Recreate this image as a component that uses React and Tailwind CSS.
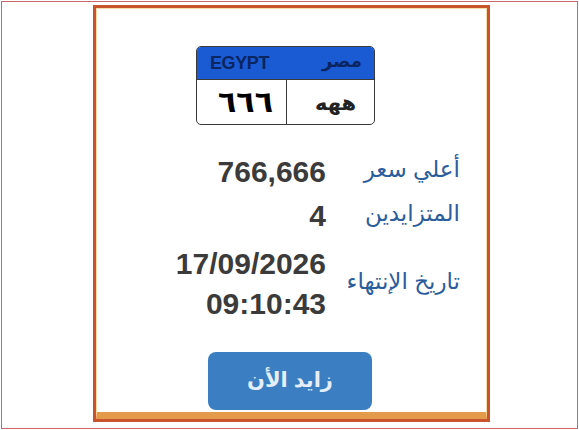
import React from 'react';

const font = { fontFamily: '"Liberation Sans", "DejaVu Sans", Arial, sans-serif' };

function Plate() {
  return (
    <div className="w-[179px] h-[79px] ml-[99px] mt-[37px] rounded-[5px] border-[1.5px] border-[#3a3a3a] overflow-hidden bg-white flex flex-col">
      <div className="h-[33px] bg-[#1a5bd4] flex items-center justify-between pl-[13px] pr-[12px] border-b-[1.5px] border-[#3a3a3a]">
        <span className="text-[18px] font-bold text-[#0a2560] tracking-[-0.4px]">EGYPT</span>
        <span dir="rtl" className="text-[18px] font-bold text-[#0a2560] pb-[3px]">مصر</span>
      </div>
      <div className="flex-1 flex">
        <div className="w-[90px] flex items-center justify-center border-r-[1.5px] border-[#3a3a3a] pl-[8px]">
          <span dir="rtl" className="text-[30px] font-bold text-black leading-none">٦٦٦</span>
        </div>
        <div className="flex-1 flex items-center justify-center pl-[10px]">
          <span dir="rtl" className="text-[21px] font-bold text-[#222] leading-none">ههه</span>
        </div>
      </div>
    </div>
  );
}

function Row({ values, label, className = '' }) {
  return (
    <div className={`flex items-center ${className}`}>
      <div className="w-[229px] flex flex-col items-end">
        {values.map((v) => (
          <div key={v} className="text-[30px] font-bold text-[#3b3b3b] leading-[40px]">{v}</div>
        ))}
      </div>
      <div dir="rtl" className="flex-1 text-right pr-[26px] pb-[6px] text-[23px] text-[#2b5d9c]">{label}</div>
    </div>
  );
}

export default function App() {
  return (
    <div className="w-[579px] h-[430px] bg-white p-px" style={font}>
      <div className="w-full h-full border border-[#c8686c] pt-[3px]">
        <div className="ml-[91px] w-[397px] h-[417px] border-[3px] border-[#c8532c] bg-white">
          <div className="h-full border border-[#f5dca8] border-b-[7px] border-b-[#e39a4a] flex flex-col">
            <Plate />
            <Row className="mt-[27px]" values={['766,666']} label="أعلي سعر" />
            <Row className="mt-[3px]" values={['4']} label="المتزايدين" />
            <Row className="mt-[8px]" values={['17/09/2026', '09:10:43']} label="تاريخ الإنتهاء" />
            <div className="mt-[28px] ml-[111px] w-[164px] h-[58px] rounded-[8px] bg-[#3b7fc2] flex items-center justify-center">
              <span dir="rtl" className="text-[21px] font-bold text-[#e6eef8] pb-[2px]">زايد الأن</span>
            </div>
          </div>
        </div>
      </div>
    </div>
  );
}
